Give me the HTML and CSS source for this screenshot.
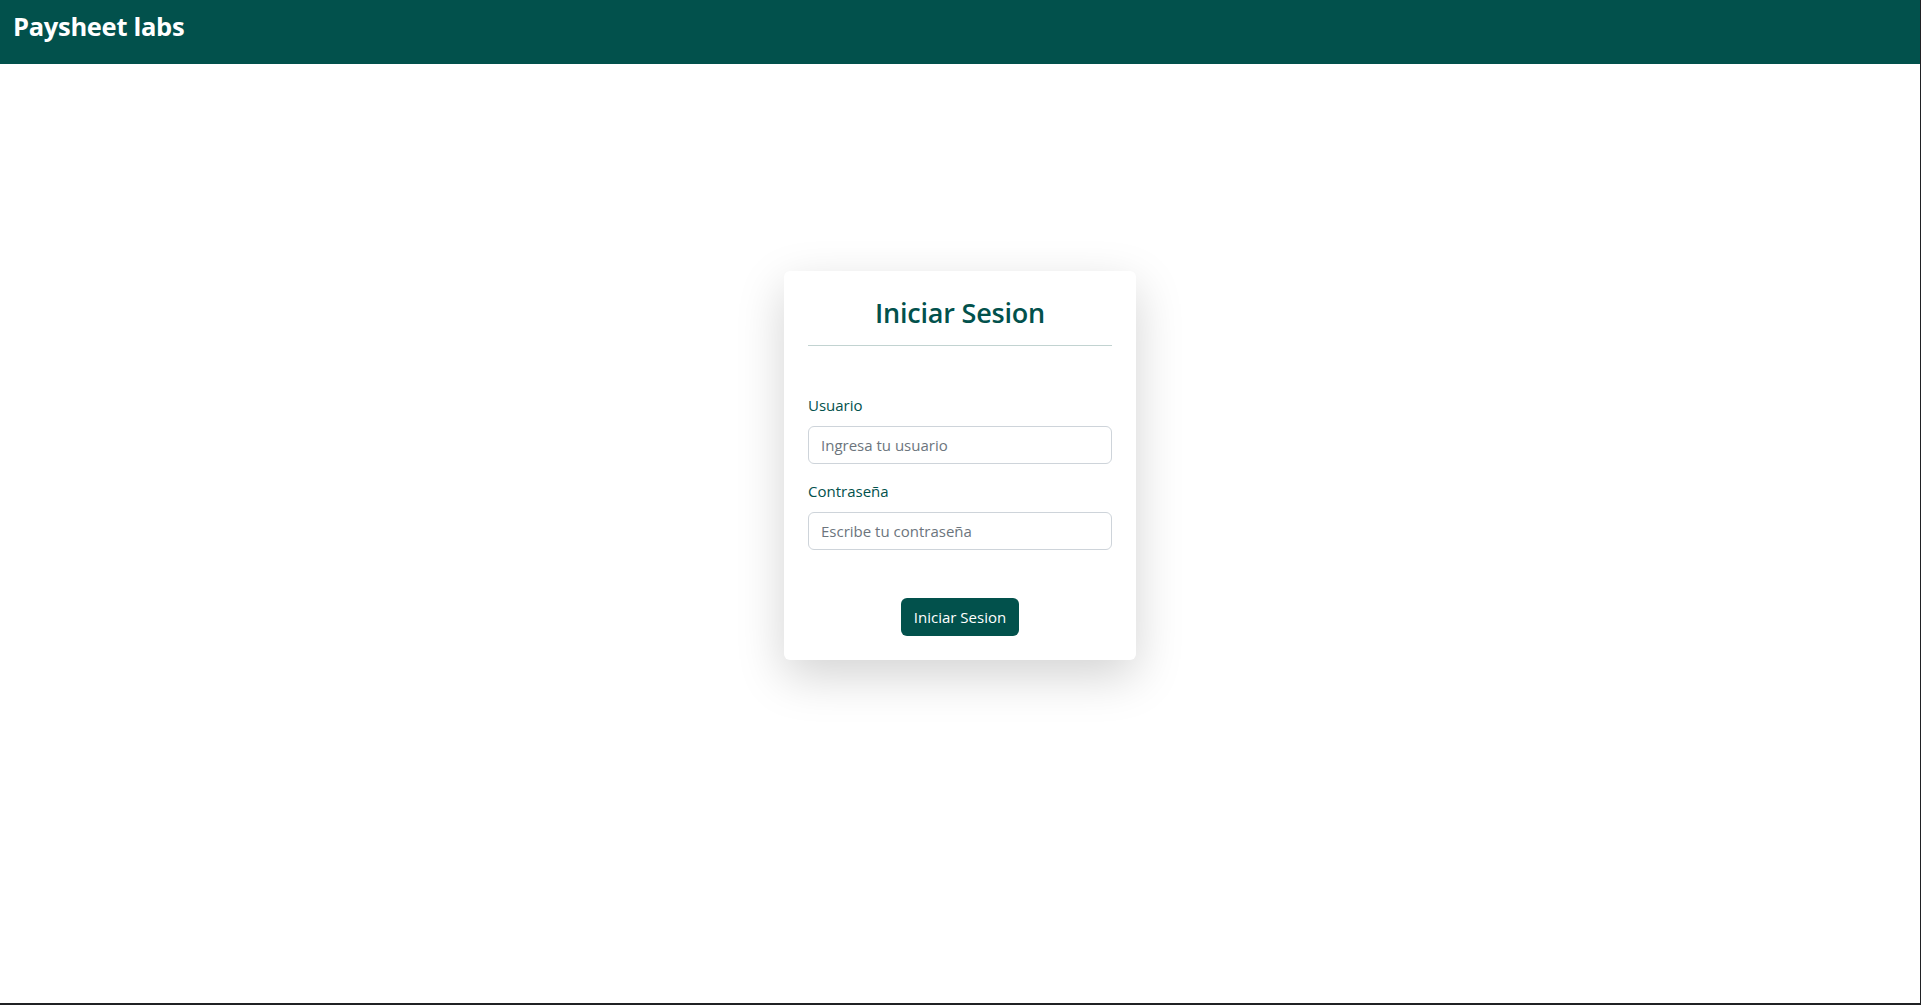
FILE: index.html
```html
<!DOCTYPE html>
<html lang="es">
<head>
<meta charset="utf-8">
<title>Paysheet labs</title>
<link rel="stylesheet" href="styles.css">
</head>
<body>
<header class="topbar">
  <span class="brand">Paysheet labs</span>
</header>
<main class="page">
  <form class="card">
    <h2 class="card-title">Iniciar Sesion</h2>
    <hr class="divider">
    <div class="field">
      <label class="field-label" for="usuario">Usuario</label>
      <input class="field-input" id="usuario" type="text" placeholder="Ingresa tu usuario">
    </div>
    <div class="field">
      <label class="field-label" for="clave">Contraseña</label>
      <input class="field-input" id="clave" type="password" placeholder="Escribe tu contraseña">
    </div>
    <div class="actions">
      <button class="btn" type="button">Iniciar Sesion</button>
    </div>
  </form>
</main>
</body>
</html>
```
FILE: styles.css
```css
* { box-sizing: border-box; }
html, body { margin: 0; padding: 0; }
body {
  background: #ffffff;
  font-family: "Open Sans", "Noto Sans", sans-serif;
  color: #212529;
  min-height: 100vh;
}
body::after {
  content: "";
  position: fixed;
  inset: 0;
  border-right: 1px solid #202124;
  border-bottom: 2px solid #202124;
  pointer-events: none;
}
.topbar {
  height: 64px;
  background: #02514c;
  display: flex;
  align-items: flex-start;
  padding: 13px 0 0 13px;
}
.brand {
  color: #ffffff;
  font-size: 25.5px;
  line-height: 26px;
  font-weight: 700;
  letter-spacing: -0.3px;
}
.page {
  display: flex;
  justify-content: center;
  padding-top: 207px;
  padding-right: 1px;
}
.card {
  width: 352px;
  background: #ffffff;
  border-radius: 6px;
  padding: 24px;
  box-shadow: 0 16px 48px rgba(0, 0, 0, 0.175);
}
.card-title {
  margin: 0;
  text-align: center;
  color: #02514c;
  font-size: 27px;
  font-weight: 600;
  line-height: 36px;
  letter-spacing: -0.2px;
}
.divider {
  margin: 14px 0 0;
  border: 0;
  border-top: 1px solid #c2d3d1;
}
.field { margin-top: 47px; }
.field + .field { margin-top: 15px; }
.field-label {
  display: block;
  color: #02514c;
  font-size: 15px;
  line-height: 24px;
  margin-bottom: 9px;
}
.field-input {
  display: block;
  width: 100%;
  height: 38px;
  padding: 0 12px;
  border: 1px solid #ced4da;
  border-radius: 6px;
  font-family: inherit;
  font-size: 15px;
  color: #212529;
  background: #fff;
}
.field-input::placeholder { color: #6c757d; }
.actions {
  display: flex;
  justify-content: center;
  margin-top: 48px;
}
.btn {
  height: 38px;
  width: 118px;
  border: 0;
  border-radius: 6px;
  background: #02514c;
  color: #ffffff;
  font-family: inherit;
  font-size: 15px;
  padding: 0;
}
```
